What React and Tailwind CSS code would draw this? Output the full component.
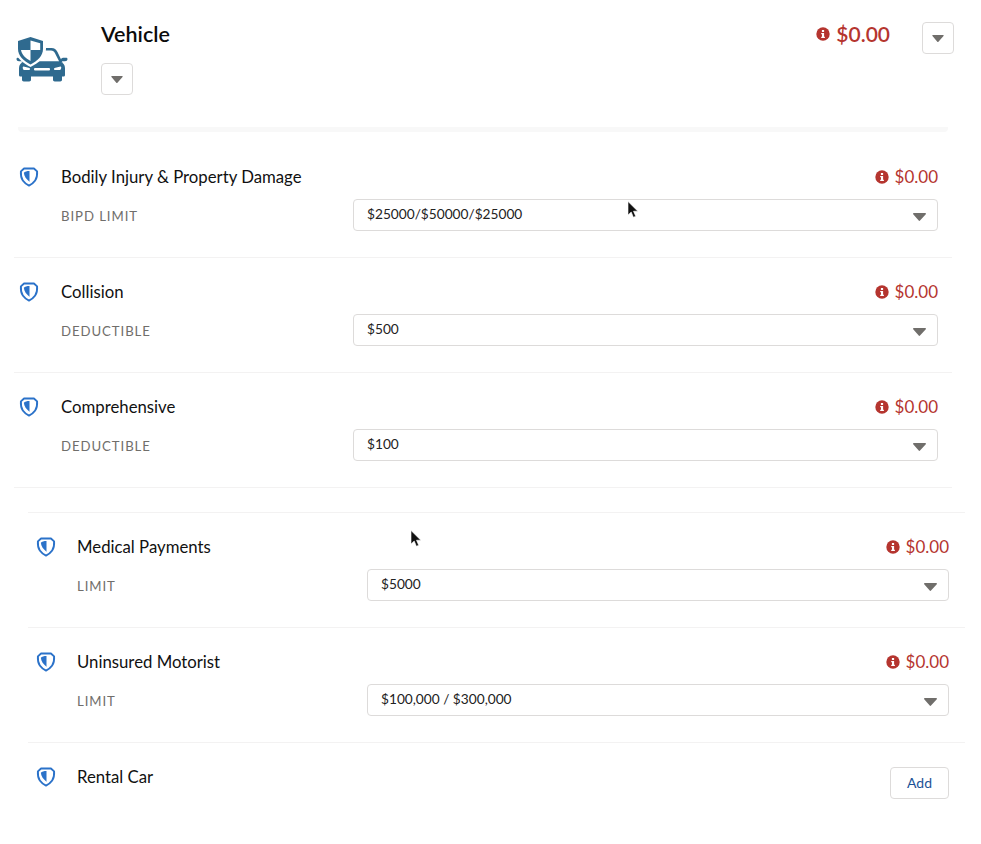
const mainRows = [
  { title: "Bodily Injury & Property Damage", label: "BIPD LIMIT", value: "$25000/$50000/$25000" },
  { title: "Collision", label: "DEDUCTIBLE", value: "$500" },
  { title: "Comprehensive", label: "DEDUCTIBLE", value: "$100" },
];

const nestedRows = [
  { title: "Medical Payments", label: "LIMIT", value: "$5000" },
  { title: "Uninsured Motorist", label: "LIMIT", value: "$100,000 / $300,000" },
];

function Caret({ className }) {
  return (
    <svg viewBox="0 0 13 8" className={className} fill="#706e6b">
      <path d="M0.8 0h11.4c.7 0 1 .7.6 1.2L7 7.6c-.3.4-1 .4-1.3 0L.2 1.2C-.2.7.1 0 .8 0z" />
    </svg>
  );
}

function CarShield() {
  return (
    <svg viewBox="0 0 52 46" className="w-[52px] h-[46px] shrink-0" fill="#2f6a8f">
      {/* car */}
      <path d="M25 12h10.500c3 0 4.500 1.500 6 4l5 10.500H6l2-8h16z" />
      <path d="M29 14.500h6c2 0 3 1 4 2.800l4.200 8.200H14c8-1 14-5 15-11z" fill="#fff" />
      <path d="M0.500 23c0-.8.6-1.300 1.500-1.300h3c1 0 1.800.8 2 1.800l.5 1.800H3c-1.400 0-2.500-1-2.500-2.300z" />
      <path d="M51.500 23c0-.8-.6-1.300-1.500-1.300h-3c-1 0-1.800.8-2 1.800l-.5 1.800H49c1.400 0 2.500-1 2.500-2.300z" />
      <path d="M8 25.500h36c3 1 5 3.500 5 6.500v7c0 1-.8 1.500-1.500 1.500h-43C3.800 40.500 3 40 3 39v-7c0-3 2-5.500 5-6.500z" />
      <path d="M6 40h9v3.800c0 1-.8 1.700-1.700 1.700H7.700c-.9 0-1.700-.7-1.700-1.700zM37 40h9v3.800c0 1-.8 1.700-1.700 1.700h-5.600c-.9 0-1.700-.7-1.700-1.700z" />
      <path d="M7.500 30.500l6 1.500c.7.200.6 2-.2 2H8c-1 0-2-3.600-.5-3.500zM44.500 30.500l-6 1.500c-.7.200-.6 2 .2 2H44c1 0 2-3.600.5-3.500z" fill="#fff" />
      <rect x="18" y="32" width="16" height="2.500" rx="1" fill="#fff" />
      {/* shield */}
      <path d="M14.500 -1.500L30 3.500V13c0 8-7 13.500-15.500 18C6 26.500 -1 21 -1 13V3.500z" fill="#fff" />
      <path d="M14.500 1L27 5v8c0 7-5.500 11.500-12.500 15.500C7.500 24.500 2 20 2 13V5z" />
      <path d="M14.500 4.500V14h9.700V7.200zM14.500 14v11C9.500 22 5.800 18.800 5 14z" fill="#fff" />
    </svg>
  );
}

function CoverageShield() {
  return (
    <svg viewBox="0 0 20 21" className="w-5 h-5 -mt-[1px] shrink-0" fill="none">
      <path
        d="M4.800 1.600h10.400l3.300 3c.3 4.400-.2 7-2 9.600-1.500 2.100-3.700 4-6.500 5.300-2.800-1.300-5-3.200-6.500-5.300-1.800-2.600-2.300-5.200-2-9.600z"
        stroke="#2b72c9"
        strokeWidth="2"
        strokeLinejoin="round"
      />
      <path d="M10.500 4.300c-2.500 0-5 .5-5.900 1.700.1 3.500 2.800 7 5.900 9.500z" fill="#2b72c9" />
    </svg>
  );
}

function Price({ big }) {
  return (
    <div className={`flex items-center text-[#b5352f] ${big ? "gap-[6px] text-[21px] font-semibold" : "gap-[6px] text-[17px]"}`}>
      <svg viewBox="0 0 14 14" className="w-[14px] h-[14px] shrink-0">
        <circle cx="7" cy="7" r="6.700" fill="#b5352f" />
        <rect x="5.900" y="3" width="2.200" height="2" fill="#fff" />
        <path d="M5.200 6h2.900v3.800h.8V11H5.200V9.800h.8V7.200h-.8z" fill="#fff" />
      </svg>
      <span>$0.00</span>
    </div>
  );
}

function IconButton({ className }) {
  return (
    <button className={`w-8 h-8 flex items-center justify-center bg-white border border-[#dddbda] rounded ${className || ""}`}>
      <Caret className="w-[12px] h-[7px]" />
    </button>
  );
}

function SelectBox({ value }) {
  return (
    <div className="flex-1 h-8 pl-[13px] flex items-center justify-between bg-white border border-[#dddbda] rounded text-[13.7px] text-[#222]">
      <span className="-mt-[2px]">{value}</span>
      <Caret className="w-[13px] h-[8px] mr-[11px] mt-[3px]" />
    </div>
  );
}

function CoverageRow({ title, label, value, nested }) {
  return (
    <div className="pt-[22px] pb-[26px] border-b border-[#f3f2f2]">
      <div className="flex items-start justify-between">
        <div className={`flex items-center h-6 ${nested ? "pl-2" : "pl-[5px]"}`}>
          <CoverageShield />
          <div className={`text-[16.75px] text-[#111] ${nested ? "ml-[21px]" : "ml-[22px]"}`}>{title}</div>
        </div>
        <div className={`flex items-center h-6 ${nested ? "pr-4" : "pr-[14px]"}`}>
          <Price />
        </div>
      </div>
      <div className={`mt-[10px] flex items-center ${nested ? "pl-[49px] pr-4" : "pl-[47px] pr-[14px]"}`}>
        <div className={`${nested ? "w-[290px]" : "w-[292px]"} mt-1 text-[13.2px] tracking-[0.07em] text-[#706e6b]`}>{label}</div>
        <SelectBox value={value} />
      </div>
    </div>
  );
}

function Cursor({ className }) {
  return (
    <svg viewBox="0 0 12 18" className={`absolute w-3 h-[18px] ${className}`}>
      <path d="M1 0.500v13.500l3.200-3 2.200 5.300 2.300-1-2.200-5.100h4.300z" fill="#111" stroke="#fff" strokeWidth="0.600" />
    </svg>
  );
}

export default function App() {
  return (
    <div className="relative w-[981px] h-[844px] bg-white overflow-hidden font-['Lato',sans-serif]">
      {/* Header */}
      <div className="h-[127px] pt-[22px] pl-4 pr-[27px] flex items-start">
        <div className="mt-[14px]">
          <CarShield />
        </div>
        <div className="ml-[33px] flex-1">
          <div className="text-[21.5px] font-semibold leading-6 text-[#0c0c0c]">Vehicle</div>
          <IconButton className="mt-[17px]" />
        </div>
        <div className="h-6 flex items-center mr-[32px]">
          <Price big />
        </div>
        <IconButton />
      </div>
      <div className="mx-[18px] w-[930px] h-[5px] bg-[#f8f8f8] rounded-b" />

      {/* Main coverages */}
      <div className="mt-[11px] ml-[14px] w-[938px]">
        {mainRows.map((row) => (
          <CoverageRow key={row.title} {...row} />
        ))}
      </div>

      {/* Optional coverages */}
      <div className="mt-6 ml-[28px] w-[937px] border-t border-[#f3f2f2]">
        {nestedRows.map((row) => (
          <CoverageRow key={row.title} {...row} nested />
        ))}
        <div className="pt-[22px] flex items-start justify-between pr-4">
          <div className="flex items-center h-6 pl-2">
            <CoverageShield />
            <div className="ml-[21px] text-[16.75px] text-[#111]">Rental Car</div>
          </div>
          <button className="mt-[2px] pb-[2px] w-[59px] h-8 bg-white border border-[#dddbda] rounded text-[14px] text-[#1b5297]">
            Add
          </button>
        </div>
      </div>

      <Cursor className="left-[627px] top-[201px]" />
      <Cursor className="left-[410px] top-[530px]" />
    </div>
  );
}
